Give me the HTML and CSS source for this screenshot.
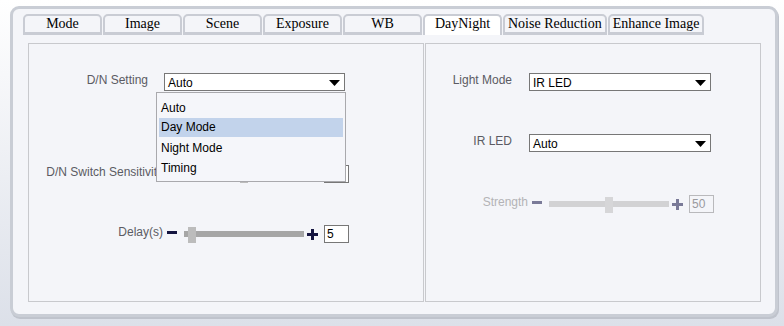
FILE: index.html
```html
<!DOCTYPE html>
<html lang="en">

<head>
  <meta charset="UTF-8">
  <meta name="viewport" content="width=device-width, initial-scale=1.0">
  <title>DayNight</title>
  <link rel="stylesheet" href="styles.css">
</head>

<body>
  <div class="frame">
    <ul class="tabs">
      <li class="tab">Mode</li>
      <li class="tab">Image</li>
      <li class="tab">Scene</li>
      <li class="tab">Exposure</li>
      <li class="tab">WB</li>
      <li class="tab active">DayNight</li>
      <li class="tab">Noise Reduction</li>
      <li class="tab">Enhance Image</li>
    </ul>

    <div class="panels">
      <div class="panel panel-left">
        <div class="row row-first">
          <span class="label label-select">D/N Setting</span>
          <div class="select-wrap">
            <div class="select">
              <span>Auto</span>
              <svg class="arrow" width="11" height="6" viewBox="0 0 11 6"><polygon points="0,0 11,0 5.5,6" fill="#000"/></svg>
            </div>
            <ul class="dropdown">
              <li>Auto</li>
              <li class="hover">Day Mode</li>
              <li>Night Mode</li>
              <li>Timing</li>
            </ul>
          </div>
        </div>

        <div class="row row-sens">
          <span class="label label-slider">D/N Switch Sensitivity</span>
          <div class="slider">
            <svg class="minus" width="10" height="3"><rect width="10" height="3" /></svg>
            <div class="track"><div class="thumb" style="left: 56px"></div></div>
            <svg class="plus" width="11" height="11"><rect x="0" y="4" width="11" height="3" /><rect x="4" y="0" width="3" height="11" /></svg>
            <div class="num">5</div>
          </div>
        </div>

        <div class="row row-delay">
          <span class="label label-slider">Delay(s)</span>
          <div class="slider">
            <svg class="minus" width="10" height="3"><rect width="10" height="3" /></svg>
            <div class="track"><div class="thumb" style="left: 4px"></div></div>
            <svg class="plus" width="11" height="11"><rect x="0" y="4" width="11" height="3" /><rect x="4" y="0" width="3" height="11" /></svg>
            <div class="num">5</div>
          </div>
        </div>
      </div>

      <div class="panel panel-right">
        <div class="row row-first">
          <span class="label label-r">Light Mode</span>
          <div class="select select-r">
            <span>IR LED</span>
            <svg class="arrow" width="11" height="6" viewBox="0 0 11 6"><polygon points="0,0 11,0 5.5,6" fill="#000"/></svg>
          </div>
        </div>

        <div class="row row-next">
          <span class="label label-r">IR LED</span>
          <div class="select select-r">
            <span>Auto</span>
            <svg class="arrow" width="11" height="6" viewBox="0 0 11 6"><polygon points="0,0 11,0 5.5,6" fill="#000"/></svg>
          </div>
        </div>

        <div class="row row-next disabled">
          <span class="label label-strength">Strength</span>
          <div class="slider">
            <svg class="minus" width="10" height="3"><rect width="10" height="3" /></svg>
            <div class="track"><div class="thumb" style="left: 56px"></div></div>
            <svg class="plus" width="11" height="11"><rect x="0" y="4" width="11" height="3" /><rect x="4" y="0" width="3" height="11" /></svg>
            <div class="num">50</div>
          </div>
        </div>
      </div>
    </div>
  </div>
</body>

</html>
```

FILE: styles.css
```css
* {
  margin: 0;
  padding: 0;
  box-sizing: border-box;
}

html {
  height: 100%;
}

body {
  height: 100%;
  padding: 6px 0 0 10px;
  background: linear-gradient(#ffffff, #dce0e9);
  font-family: "Liberation Sans", Arial, sans-serif;
  font-size: 12px;
}

.frame {
  width: 768px;
  padding: 5px 14px 12px 15px;
  background-color: #f4f5f9;
  border: 3px solid #c9cdd5;
  border-radius: 9px;
  box-shadow: 1px 2px 0 #bfc3cc;
}

/* tabs */
.tabs {
  display: flex;
  list-style: none;
  margin: 0 0 8px -5px;
}

.tab {
  min-width: 79px;
  height: 21px;
  margin-right: 1px;
  padding: 0 3px;
  border: 2px solid #c9ccd4;
  border-bottom-width: 3px;
  border-radius: 5px 5px 0 0;
  background-color: #f4f5f9;
  font-family: "Liberation Serif", "Times New Roman", serif;
  font-size: 14px;
  line-height: 16px;
  text-align: center;
  color: #000;
}

.tab.active {
  background-color: #fff;
  border-bottom: none;
}

/* panels */
.panels {
  display: flex;
  gap: 1px;
}

.panel {
  height: 259px;
  border: 1px solid #c8c9cd;
  padding-top: 29px;
}

.panel-left {
  width: 396px;
}

.panel-right {
  width: 336px;
}

.row {
  display: flex;
  align-items: flex-start;
  height: 18px;
}

.row-sens {
  margin-top: 74px;
}

.row-delay {
  margin-top: 42px;
}

.row-next {
  margin-top: 43px;
}

.label {
  flex-shrink: 0;
  text-align: right;
  white-space: nowrap;
  color: #5b5b63;
  line-height: 14px;
}

.label-select {
  width: 119px;
  margin-right: 16px;
}

.label-slider {
  width: 134px;
  margin-right: 4px;
}

.label-r {
  width: 86px;
  margin-right: 17px;
}

.label-strength {
  width: 102px;
  margin-right: 4px;
}

/* select */
.select-wrap {
  position: relative;
}

.select {
  display: flex;
  align-items: center;
  justify-content: space-between;
  width: 181px;
  height: 18px;
  padding: 1px 4px 0 3px;
  border: 1px solid #777;
  background-color: #fff;
  color: #000;
}

.select-r {
  width: 182px;
}

.arrow {
  display: block;
}

.dropdown {
  position: absolute;
  left: -8px;
  top: 19px;
  width: 190px;
  padding: 5px 2px 3px 2px;
  list-style: none;
  background-color: #f5f6fa;
  border: 1px solid #a9a9ad;
  z-index: 2;
}

.dropdown li {
  height: 20px;
  line-height: 20px;
  padding-left: 2px;
  color: #000;
}

.dropdown li.hover {
  background-color: #c2d3eb;
  height: 19px;
  line-height: 19px;
  margin-bottom: 1px;
}

/* slider */
.slider {
  display: flex;
  align-items: center;
  height: 18px;
}

.minus {
  fill: #141440;
  margin: 0 7px 3px 0;
}

.plus {
  fill: #141440;
  margin: 0 6px 0 3px;
}

.track {
  position: relative;
  width: 120px;
  height: 6px;
  background-color: #a6a6a6;
}

.thumb {
  position: absolute;
  top: -4px;
  width: 8px;
  height: 16px;
  background-color: #bcbcbc;
}

.num {
  width: 25px;
  height: 18px;
  padding: 0 0 0 2px;
  border: 1px solid #777;
  background-color: #fff;
  line-height: 16px;
  font-size: 12px;
  color: #000;
}

.disabled .label {
  color: #b3b3b6;
}

.disabled .minus,
.disabled .plus {
  fill: #7a7a98;
}

.disabled .track {
  background-color: #d2d2d4;
}

.disabled .thumb {
  background-color: #d6d6d8;
}

.disabled .num {
  border-color: #b9b9bc;
  background-color: #f4f5f9;
  color: #9a9a9e;
}
```
